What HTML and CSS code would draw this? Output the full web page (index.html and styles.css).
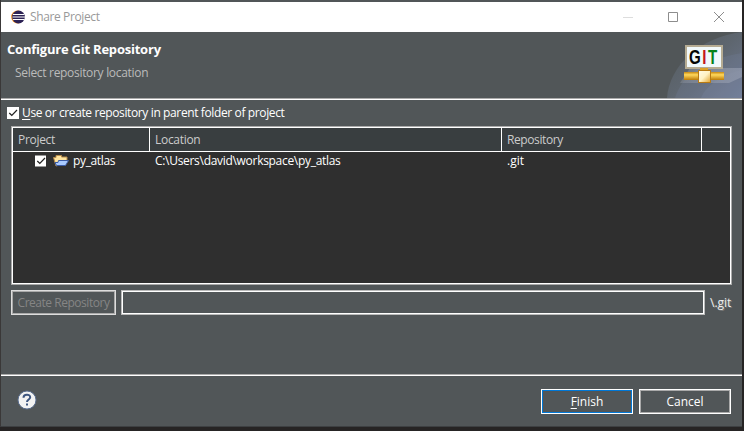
FILE: index.html
```html
<!DOCTYPE html>
<html lang="en">
<head>
<meta charset="utf-8">
<title>Share Project</title>
<link rel="stylesheet" href="styles.css">
</head>
<body>
<div class="window">
  <div class="titlebar">
    <svg class="logo" width="14" height="14" viewBox="0 0 14 14"><circle cx="6.5" cy="7" r="6.4" fill="#f39222"/><circle cx="7.5" cy="7" r="6.4" fill="#2c2255"/><path d="M2 4.500h11.400M1.500 7h12.500M2 9.500h11.400" stroke="#fff" stroke-width="1"/></svg>
    <span class="caption">Share Project</span>
    <svg class="controls" width="110" height="14" viewBox="0 0 110 14"><path d="M3 7.500h10" stroke="#ddd"/><path d="M48.500 2.500h9v9h-9z" fill="none" stroke="#8d8d8d"/><path d="M94 2l10 10M104 2L94 12" stroke="#8d8d8d" fill="none"/></svg>
  </div>
  <div class="header">
    <div class="headings">
      <h1><span>Configure Git Repository</span></h1>
      <p><span>Select repository location</span></p>
    </div>
    <svg class="banner" width="76" height="66" viewBox="0 0 76 66">
      <defs>
        <linearGradient id="sky" x1="0" y1="0" x2="1" y2="1"><stop offset="0" stop-color="#53595c"/><stop offset=".5" stop-color="#5e666f"/><stop offset="1" stop-color="#6d7890"/></linearGradient>
        <linearGradient id="gold" x1="0" y1="0" x2="0" y2="1"><stop offset="0" stop-color="#c88a12"/><stop offset=".35" stop-color="#ffd85c"/><stop offset="1" stop-color="#bd7c08"/></linearGradient>
        <linearGradient id="node" x1="0" y1="0" x2="1" y2="1"><stop offset="0" stop-color="#fffbe8"/><stop offset=".5" stop-color="#fff2c4"/><stop offset="1" stop-color="#e0a22c"/></linearGradient>
        <linearGradient id="beam" x1="0" y1="0" x2="1" y2="0"><stop offset="0" stop-color="#a9aeb9" stop-opacity=".25"/><stop offset="1" stop-color="#939bae" stop-opacity=".7"/></linearGradient>
      </defs>
      <path d="M1 66C3 34 34 5 76 0v66z" fill="url(#sky)"/>
      <path d="M9 66C16 43 38 27 76 21v45z" fill="#7784a2" opacity=".22"/>
      <path d="M35 66C39 55 54 43 76 38v28z" fill="#8b98b9" opacity=".15"/>
      <path d="M24 36H76V45L63 51H14z" fill="url(#beam)"/>
      <rect x="20" y="14" width="36" height="22" fill="#f1f9fb" stroke="#b6ac93" stroke-width="2"/>
      <text class="git-letters" transform="scale(.72 1)" y="32"><tspan x="32" fill="#050505">G</tspan><tspan x="50.500" fill="#c4161c">I</tspan><tspan x="58.500" fill="#078318">T</tspan></text>
      <rect x="34" y="36" width="8" height="4" fill="#dba128"/>
      <rect x="18" y="40" width="40" height="8" fill="url(#gold)"/>
      <rect x="32.500" y="38.500" width="12" height="12" fill="url(#node)" stroke="#b87a12"/>
    </svg>
  </div>
  <div class="body">
    <div class="option">
      <svg width="12" height="12" viewBox="0 0 12 12"><rect width="12" height="12" fill="#fff"/><path d="M2.300 6l2.500 2.500L10 3" fill="none" stroke="#222" stroke-width="1.200"/></svg>
      <span class="option-text"><u>U</u>se or create repository in parent folder of project</span>
    </div>
    <div class="table">
      <div class="row head"><div><span class="project">Project</span></div><div><span class="location">Location</span></div><div><span class="repo">Repository</span></div><div></div></div>
      <div class="row">
        <div class="name">
          <svg width="12" height="12" viewBox="0 0 12 12"><rect width="11" height="11" y=".5" fill="#fff"/><path d="M2.300 6l2.500 2.500L10 3" fill="none" stroke="#222" stroke-width="1.200"/></svg>
          <svg class="folder" width="16" height="14" viewBox="0 0 16 14"><path d="M.5 3.500H3V1.500H8.500V3H14V9L3 12z" fill="#ffe5a0" stroke="#b58b4b"/><path d="M5.500 6.500H15.500L12.500 11.500H3.500L2 8.500H5z" fill="#a9caff" stroke="#3c5ca5"/></svg>
          <span class="item">py_atlas</span>
        </div>
        <div><span class="path">C:\Users\david\workspace\py_atlas</span></div><div><span class="git">.git</span></div><div></div>
      </div>
    </div>
    <div class="create">
      <div class="button disabled"><span>Create Repository</span></div>
      <div class="field"></div>
      <span class="suffix">\.git</span>
    </div>
  </div>
  <div class="footer">
    <svg class="help" width="20" height="20" viewBox="0 0 20 20"><circle cx="10" cy="10" r="9" fill="#f2f2f2" stroke="#5a6e91"/><path d="M6.500 7.700C6.500 3.700 13.200 3.800 13.200 7.200C13.200 9.500 10 9.400 10 12" fill="none" stroke="#3e5680" stroke-width="2"/><path d="M9 13.500h2v2H9z" fill="#3e5680"/></svg>
    <div class="button primary"><span class="finish"><u>F</u>inish</span></div>
    <div class="button"><span class="cancel">Cancel</span></div>
  </div>
</div>
</body>
</html>
```
FILE: styles.css
```css
* { box-sizing: border-box; }
body { margin: 0; width: 744px; height: 431px; overflow: hidden; background: #262424; color: #fff; font: 12px/16px "Open Sans", "Noto Sans", sans-serif; white-space: nowrap; }
span { display: inline-block; }
.window { width: 742px; height: 427px; padding: 2px 0 0; border-left: 1px solid #3a3838; border-bottom: 1px solid #3d4042; background: #515658; display: flex; flex-direction: column; }
.titlebar { height: 30px; flex: none; background: #fff; color: #999; display: flex; align-items: center; padding: 0 12px 0 10px; }
.caption { margin-left: 5px; letter-spacing: -.38px; }
.controls { margin-left: auto; }
.header { height: 68px; flex: none; display: flex; justify-content: space-between; border-bottom: 1px solid #fff; box-shadow: inset 0 -1px #aaa; }
.headings { padding: 9px 0 0 6px; }
h1 { margin: 0; font-size: 13px; line-height: 16px; font-weight: 700; letter-spacing: -.22px; }
p { margin: 8px 0 0 8px; line-height: 16px; color: #bbb; letter-spacing: -.31px; }
.git-letters { font: bold 21px "Liberation Sans", sans-serif; }
.body { flex: 1; padding: 5px 9px 0 10px; }
.option { height: 16px; margin-left: -4px; display: flex; align-items: center; gap: 3px; letter-spacing: -.38px; }
u { text-decoration: underline; text-underline-offset: 2px; text-decoration-thickness: 1px; }
.table { margin-top: 5px; width: 721px; height: 159px; border: 1px solid #aaa; background: #2f2f2f; box-shadow: inset 0 0 0 1px #fff; padding: 1px; }
.row { height: 18px; display: grid; grid-template-columns: 137px 352px 200px 1fr; line-height: 18px; letter-spacing: -.3px; }
.row > div { padding-left: 5px; }
.head { height: 24px; background: #393e40; color: #ccc; border-bottom: 1px solid #fff; line-height: 24px; }
.head > div { border-right: 1px solid #fff; }
.head > div:last-child { border-right: 0; }
.repo { letter-spacing: -.4px; }
.git { letter-spacing: 0; }
.row > .name:first-child { display: flex; align-items: center; padding-left: 22px; }
.folder { margin-left: 6px; }
.item { margin-left: 4px; letter-spacing: -.36px; }
.create { margin-top: 5px; display: flex; align-items: center; }
.button { height: 25px; width: 92px; border: 1px solid #fff; box-shadow: inset 0 0 0 1px #aaa; display: flex; align-items: center; justify-content: center; }
.disabled { width: 105px; color: #858585; border-color: #ddd; letter-spacing: -.47px; }
.field { width: 584px; height: 25px; margin-left: 5px; border: 1px solid #bbb; box-shadow: inset 0 0 0 1px #fff; }
.suffix { margin-left: 5px; color: #eee; text-shadow: 1px 1px #777; }
.footer { height: 52px; flex: none; border-top: 1px solid #aaa; box-shadow: inset 0 1px #fff; display: flex; padding: 14px 11px 0 16px; gap: 6px; }
.help { margin-right: auto; margin-top: 1px; }
.primary { box-shadow: inset 0 0 0 1px #0078d7; }
```
